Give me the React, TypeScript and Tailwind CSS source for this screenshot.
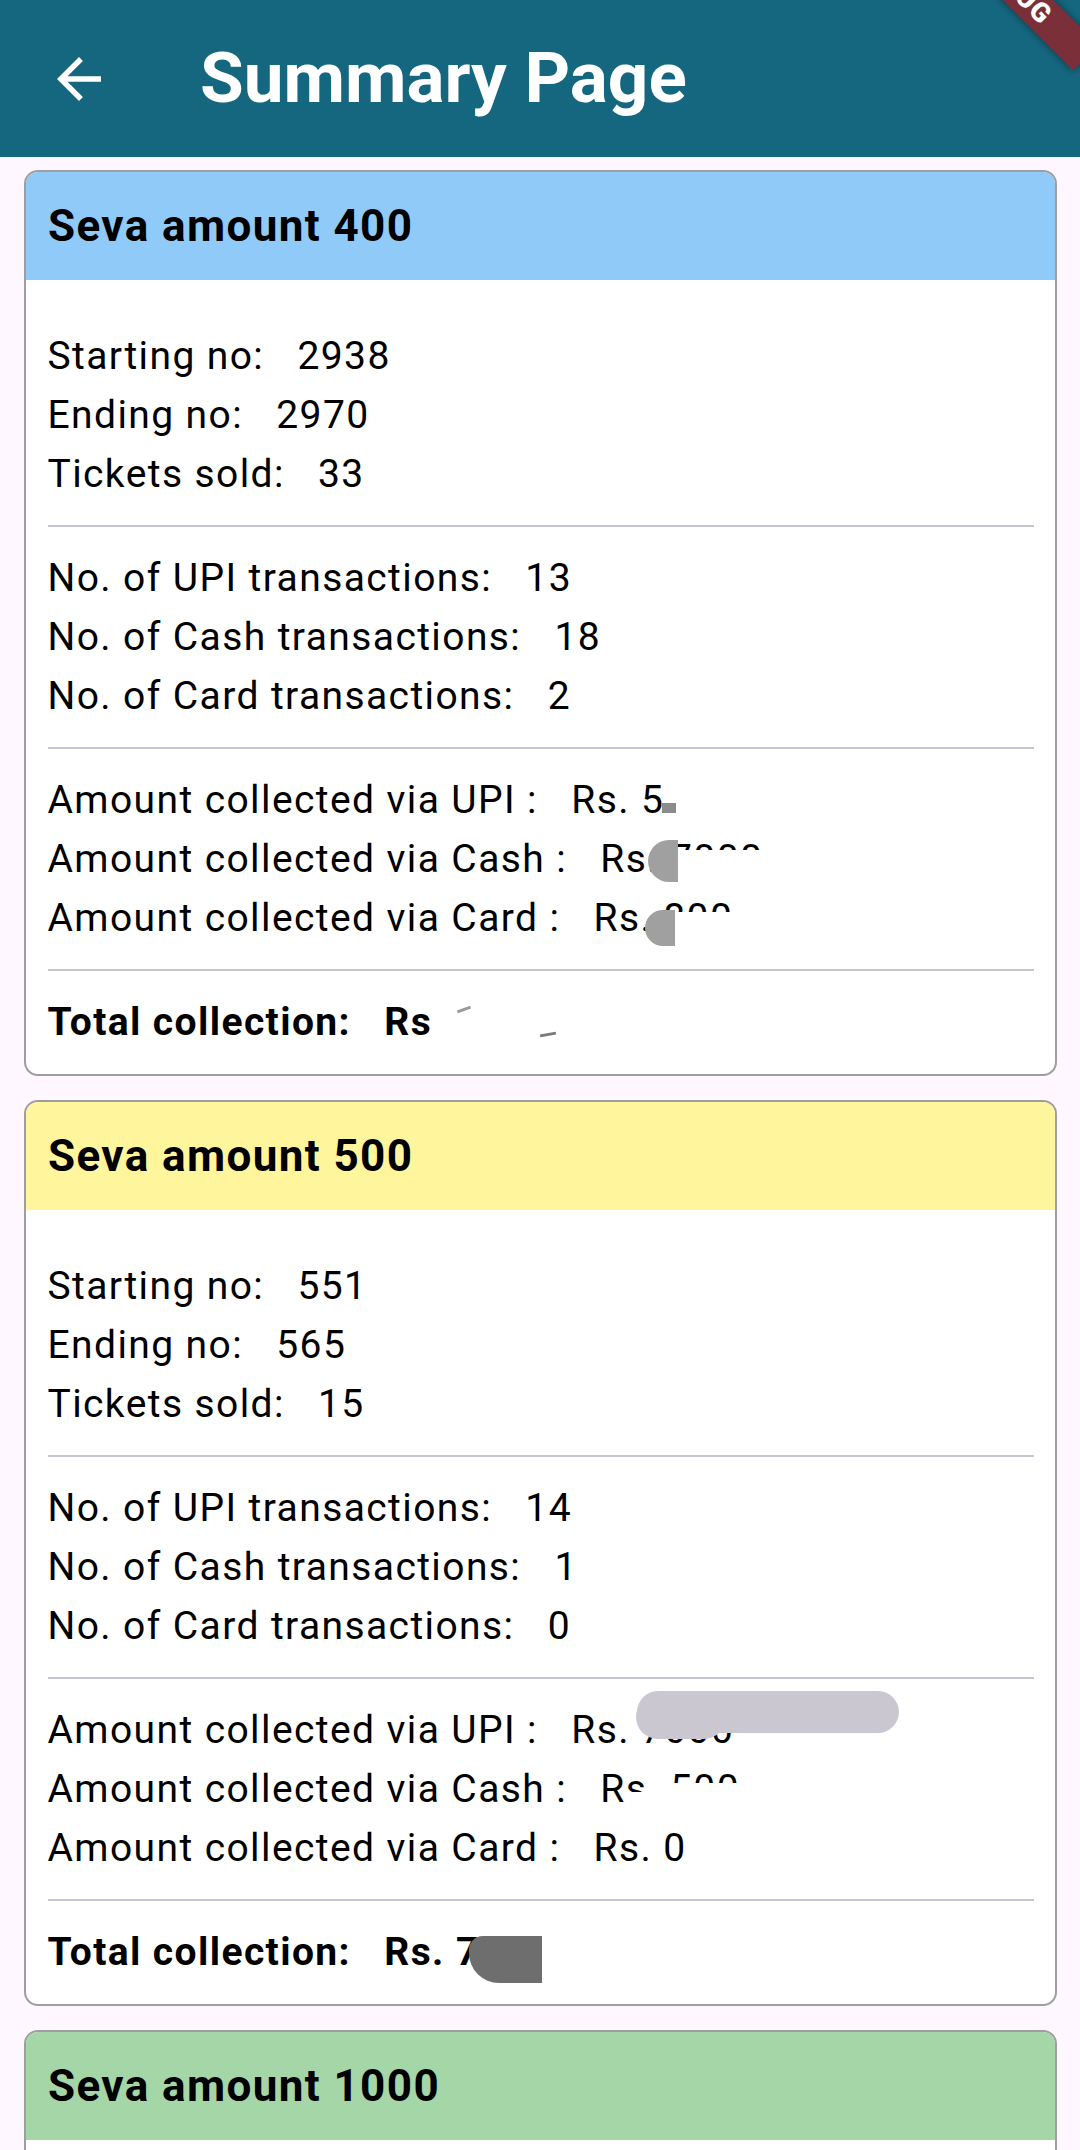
import { clsx } from 'clsx';
import type { ReactNode } from 'react';

type Seva = {
  amount: number;
  header: string;
  start: number;
  end: number;
  sold: number;
  upi: number;
  cash: number;
  card: number;
  upiAmt: string;
  cashAmt: string;
  cardAmt: string;
  total: string;
};

const sevas: Seva[] = [
  { amount: 400, header: 'bg-[#90caf9]', start: 2938, end: 2970, sold: 33, upi: 13, cash: 18, card: 2, upiAmt: 'Rs. 5', cashAmt: 'Rs. 7000', cardAmt: 'Rs. 800', total: 'Rs' },
  { amount: 500, header: 'bg-[#fff59d]', start: 551, end: 565, sold: 15, upi: 14, cash: 1, card: 0, upiAmt: 'Rs. 7000', cashAmt: 'Rs. 500', cardAmt: 'Rs. 0', total: 'Rs. 7500' },
  { amount: 1000, header: 'bg-[#a5d6a7]', start: 120, end: 131, sold: 12, upi: 9, cash: 3, card: 0, upiAmt: 'Rs. 9000', cashAmt: 'Rs. 3000', cardAmt: 'Rs. 0', total: 'Rs. 12000' },
];

function Row({ label, children, bold }: { label: string; children: ReactNode; bold?: boolean }) {
  return (
    <div className={clsx('h-[59px] leading-[59px] whitespace-pre text-[39px] tracking-[1.4px]', bold && 'font-bold')}>
      {label}
      {'   '}
      {children}
    </div>
  );
}

function Divider() {
  return <div className="my-[21.5px] h-[2px] bg-[#cac4d0]" />;
}

// scribbles painted over the amounts in the screenshot
function Marks({ index, row }: { index: number; row: string }) {
  if (index === 0) {
    if (row === 'upi') return <span className="absolute left-[91px] top-[32px] h-[10px] w-[14px] bg-[#8c8c8c]" />;
    if (row === 'cash')
      return (
        <>
          <span className="absolute left-[78px] top-[20px] h-[39px] w-[110px] bg-white" />
          <span className="absolute left-[48px] top-[10px] h-[42px] w-[30px] rounded-l-full bg-[#a0a0a0]" />
        </>
      );
    if (row === 'card')
      return (
        <>
          <span className="absolute left-[81px] top-[23px] h-[36px] w-[90px] bg-white" />
          <span className="absolute left-[51px] top-[21px] h-[36px] w-[30px] rounded-l-full bg-[#a0a0a0]" />
        </>
      );
    if (row === 'total')
      return (
        <>
          <span className="absolute left-[73px] top-[15px] h-[3px] w-[14px] -rotate-[20deg] bg-[#9a9a9a]" />
          <span className="absolute left-[156px] top-[40px] h-[3px] w-[16px] -rotate-[10deg] bg-[#7a7a7a]" />
        </>
      );
  }
  if (index === 1) {
    if (row === 'upi')
      return (
        <>
          <span className="absolute left-[66px] top-[-10px] h-[42px] w-[262px] rounded-full bg-[#cbc7d1]" />
          <span className="absolute left-[65px] top-[-6px] h-[44px] w-[90px] rounded-full bg-[#cbc7d1]" />
        </>
      );
    if (row === 'cash')
      return (
        <>
          <span className="absolute left-[25px] top-[32px] h-[27px] w-[26px] bg-white" />
          <span className="absolute left-[50px] top-[23px] h-[36px] w-[125px] bg-white" />
        </>
      );
    if (row === 'total')
      return (
        <>
          <span className="absolute left-[158px] top-0 h-[59px] w-[50px] bg-white" />
          <span className="absolute left-[85px] top-[13px] h-[47px] w-[73px] rounded-tl-[14px] rounded-bl-[30px] bg-[#6e6e6e]" />
        </>
      );
  }
  return null;
}

function Value({ text, index, row }: { text: string; index: number; row: string }) {
  return (
    <span className="relative inline-block h-[59px] align-top">
      {text}
      <Marks index={index} row={row} />
    </span>
  );
}

function SevaCard({ seva, index }: { seva: Seva; index: number }) {
  return (
    <div className="overflow-hidden rounded-[14px] border-2 border-[#9e9e9e] bg-white">
      <div className={clsx('flex h-[108px] items-center pl-[22px] text-[44px] font-bold tracking-[1.4px]', seva.header)}>
        Seva amount {seva.amount}
      </div>
      <div className="px-[21.5px] pt-[46.5px] pb-[22.5px]">
        <Row label="Starting no:">{seva.start}</Row>
        <Row label="Ending no:">{seva.end}</Row>
        <Row label="Tickets sold:">{seva.sold}</Row>
        <Divider />
        <Row label="No. of UPI transactions:">{seva.upi}</Row>
        <Row label="No. of Cash transactions:">{seva.cash}</Row>
        <Row label="No. of Card transactions:">{seva.card}</Row>
        <Divider />
        <Row label="Amount collected via UPI :">
          <Value text={seva.upiAmt} index={index} row="upi" />
        </Row>
        <Row label="Amount collected via Cash :">
          <Value text={seva.cashAmt} index={index} row="cash" />
        </Row>
        <Row label="Amount collected via Card :">
          <Value text={seva.cardAmt} index={index} row="card" />
        </Row>
        <Divider />
        <Row label="Total collection:" bold>
          <Value text={seva.total} index={index} row="total" />
        </Row>
      </div>
    </div>
  );
}

export default function App() {
  return (
    <div className="relative h-[2150px] w-[1080px] overflow-hidden bg-[#fef7ff] font-['Roboto',sans-serif] text-black">
      <header className="flex h-[157px] items-center bg-[#15677f] pl-[46px]">
        <svg viewBox="0 0 24 24" className="h-[66px] w-[66px] fill-white">
          <path d="M20 11H7.83l5.59-5.59L12 4l-8 8 8 8 1.41-1.41L7.83 13H20v-2z" />
        </svg>
        <h1 className="mb-[3px] ml-[88px] text-[71px] leading-none font-bold text-white">Summary Page</h1>
      </header>

      <main className="flex flex-col gap-[24px] pt-[13px] pr-[23px] pl-[24px]">
        {sevas.map((s, i) => (
          <SevaCard key={s.amount} seva={s} index={i} />
        ))}
      </main>

      <div className="pointer-events-none absolute top-0 right-0 h-[110px] w-[140px] overflow-hidden">
        <div className="absolute top-[-31px] left-[-25px] flex h-[36px] w-[200px] rotate-45 items-center justify-center bg-[#7b3039] text-[27px] leading-none font-black tracking-[1px] text-white shadow-[0_0_8px_rgba(0,0,0,0.45)]">
          DEBUG
        </div>
      </div>
    </div>
  );
}
